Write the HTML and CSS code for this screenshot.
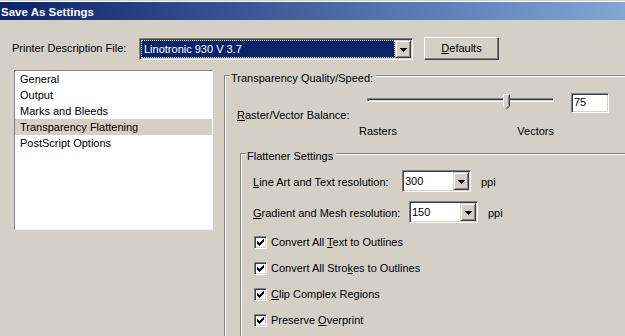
FILE: index.html
```html
<!DOCTYPE html>
<html>
<head>
<meta charset="utf-8">
<link rel="stylesheet" href="styles.css">
</head>
<body>
<div class="frame-top"></div>
<div class="caption">Save As Settings</div>
<div class="printer-row">
  <div class="printer-label">Printer Description File:</div>
  <div class="combo combo-printer">
    <div class="combo-value"><span class="sel">Linotronic 930 V 3.7</span></div>
    <div class="combo-btn"><svg width="7" height="4" viewBox="0 0 7 4"><path d="M0 0h7v1h-1v1h-1v1h-1v1h-1v-1h-1v-1h-1v-1h-1z" fill="#000"/></svg></div>
  </div>
  <div class="button"><u>D</u>efaults</div>
</div>
<div class="main">
  <div class="list">
    <div class="item">General</div>
    <div class="item">Output</div>
    <div class="item">Marks and Bleeds</div>
    <div class="item selected">Transparency Flattening</div>
    <div class="item">PostScript Options</div>
  </div>
  <div class="group outer">
    <div class="group-title">Transparency Quality/Speed:</div>
    <div class="balance">
      <div class="bal-label"><u>R</u>aster/Vector Balance:</div>
      <div class="bal-slider">
        <div class="slider">
          <div class="track"></div>
          <svg class="thumb" width="7" height="16" viewBox="0 0 7 16">
            <path d="M0 0h7v12l-3.5 3.5L0 12z" fill="#d4d0c8"/>
            <path d="M0.5 12.5V0.5h6" fill="none" stroke="#fff" stroke-width="1"/>
            <path d="M6.5 0.5v11.5l-3.2 3.2" fill="none" stroke="#404040" stroke-width="1"/>
            <path d="M5.5 1.5v10.2l-2.6 2.6" fill="none" stroke="#808080" stroke-width="1"/>
          </svg>
        </div>
        <div class="ends"><span>Rasters</span><span>Vectors</span></div>
      </div>
      <div class="textfield">75</div>
    </div>
    <div class="group inner">
      <div class="group-title">Flattener Settings</div>
      <div class="res-row first">
        <div class="res-label w-line"><u>L</u>ine Art and Text resolution:</div>
        <div class="combo combo-small">
          <div class="combo-value">300</div>
          <div class="combo-btn"><svg width="7" height="4" viewBox="0 0 7 4"><path d="M0 0h7v1h-1v1h-1v1h-1v1h-1v-1h-1v-1h-1v-1h-1z" fill="#000"/></svg></div>
        </div>
        <div class="unit">ppi</div>
      </div>
      <div class="res-row second">
        <div class="res-label w-grad"><u>G</u>radient and Mesh resolution:</div>
        <div class="combo combo-small">
          <div class="combo-value">150</div>
          <div class="combo-btn"><svg width="7" height="4" viewBox="0 0 7 4"><path d="M0 0h7v1h-1v1h-1v1h-1v1h-1v-1h-1v-1h-1v-1h-1z" fill="#000"/></svg></div>
        </div>
        <div class="unit">ppi</div>
      </div>
      <div class="checks">
        <div class="check-row"><span class="checkbox"><svg width="7" height="7" viewBox="0 0 7 7"><path d="M6 0h1v1h-1zM5 1h2v1h-2zM0 2h1v1h-1zM4 2h3v1h-3zM0 3h2v1h-2zM3 3h3v1h-3zM0 4h5v1h-5zM1 5h3v1h-3zM2 6h1v1h-1z" fill="#000"/></svg></span><span class="check-label">Convert All <u>T</u>ext to Outlines</span></div>
        <div class="check-row"><span class="checkbox"><svg width="7" height="7" viewBox="0 0 7 7"><path d="M6 0h1v1h-1zM5 1h2v1h-2zM0 2h1v1h-1zM4 2h3v1h-3zM0 3h2v1h-2zM3 3h3v1h-3zM0 4h5v1h-5zM1 5h3v1h-3zM2 6h1v1h-1z" fill="#000"/></svg></span><span class="check-label">Convert All Stro<u>k</u>es to Outlines</span></div>
        <div class="check-row"><span class="checkbox"><svg width="7" height="7" viewBox="0 0 7 7"><path d="M6 0h1v1h-1zM5 1h2v1h-2zM0 2h1v1h-1zM4 2h3v1h-3zM0 3h2v1h-2zM3 3h3v1h-3zM0 4h5v1h-5zM1 5h3v1h-3zM2 6h1v1h-1z" fill="#000"/></svg></span><span class="check-label"><u>C</u>lip Complex Regions</span></div>
        <div class="check-row"><span class="checkbox"><svg width="7" height="7" viewBox="0 0 7 7"><path d="M6 0h1v1h-1zM5 1h2v1h-2zM0 2h1v1h-1zM4 2h3v1h-3zM0 3h2v1h-2zM3 3h3v1h-3zM0 4h5v1h-5zM1 5h3v1h-3zM2 6h1v1h-1z" fill="#000"/></svg></span><span class="check-label">Preserve <u>O</u>verprint</span></div>
      </div>
    </div>
  </div>
</div>
</body>
</html>
```
FILE: styles.css
```css
* { box-sizing: border-box; }
html, body {
  margin: 0;
  padding: 0;
}
body {
  width: 625px;
  height: 336px;
  overflow: hidden;
  background: #d4d0c8;
  font-family: "Liberation Sans", Arial, sans-serif;
  font-size: 11px;
  line-height: 13px;
  color: #000;
}
u { text-decoration: underline; text-underline-offset: 1px; }

.frame-top {
  height: 2px;
  border-top: 1px solid #d4d0c8;
  background: #ffffff;
}
.caption {
  height: 18px;
  line-height: 20px;
  padding-left: 1px;
  font-weight: bold;
  font-size: 11.5px;
  color: #fff;
  white-space: nowrap;
  overflow: hidden;
  background: linear-gradient(to right, #0a246a 0px, #82a6d6 625px);
}

/* printer row */
.printer-row {
  display: flex;
  align-items: center;
  margin-top: 17px;
  height: 23px;
  padding-left: 12px;
}
.printer-label {
  width: 127px;
  white-space: nowrap;
}
.combo {
  display: flex;
  height: 22px;
  padding: 1px;
  border: 1px solid;
  border-color: #808080 #fff #fff #808080;
  box-shadow: inset 1px 1px 0 #404040, inset -1px -1px 0 #d4d0c8;
  background: #fff;
}
.combo-printer {
  width: 274px;
  margin-top: 1px;
}
.combo-value {
  flex: 1;
  display: flex;
  align-items: center;
  white-space: nowrap;
  overflow: hidden;
}
.sel {
  flex: 1;
  align-self: stretch;
  display: flex;
  align-items: center;
  padding-left: 2px;
  background: #0a246a;
  color: #fff;
  border: 1px dotted #f4eeb4;
}
.combo-btn {
  width: 16px;
  display: flex;
  align-items: center;
  justify-content: center;
  background: #d4d0c8;
  border: 1px solid;
  border-color: #d4d0c8 #404040 #404040 #d4d0c8;
  box-shadow: inset 1px 1px 0 #fff, inset -1px -1px 0 #808080;
}
.combo-btn svg { display: block; margin-top: 1px; }
.button {
  width: 75px;
  height: 23px;
  margin-left: 11px;
  display: flex;
  align-items: center;
  justify-content: center;
  border: 1px solid;
  border-color: #fff #404040 #404040 #fff;
  box-shadow: inset -1px -1px 0 #808080;
  background: #d4d0c8;
}

/* main */
.main {
  display: flex;
  align-items: flex-start;
  margin-top: 10px;
  padding-left: 14px;
}
.list {
  width: 199px;
  height: 160px;
  flex: none;
  background: #fff;
  border: 1px solid;
  border-color: #808080 #fff #eeeeee #808080;
}
.item {
  height: 16px;
  line-height: 16px;
  padding-left: 5px;
  white-space: nowrap;
}
.item.selected { background: #d4d0c8; }

.group {
  border-top: 1px solid #808080;
  border-left: 1px solid #808080;
  box-shadow: inset 1px 1px 0 #fff;
}
.group-title {
  display: block;
  width: fit-content;
  height: 13px;
  margin-top: -4px;
  margin-left: 5px;
  padding: 0 3px 0 1px;
  background: #d4d0c8;
  white-space: nowrap;
}
.outer {
  flex: none;
  width: 401px;
  height: 261px;
  margin-left: 11px;
  margin-top: 5px;
}

.balance {
  display: flex;
  align-items: flex-start;
  margin-top: 8px;
  padding-left: 12px;
}
.bal-label {
  width: 122px;
  margin-top: 16px;
  white-space: nowrap;
}
.bal-slider {
  width: 200px;
}
.slider {
  position: relative;
  height: 20px;
  padding-top: 5px;
  padding-left: 8px;
}
.track {
  width: 187px;
  height: 4px;
  border: 1px solid;
  border-color: #808080 #fff #fff #808080;
  box-shadow: inset 1px 1px 0 #404040, inset -1px -1px 0 #d4d0c8;
}
.thumb {
  position: absolute;
  left: 144px;
  top: 1px;
  display: block;
}
.ends {
  display: flex;
  justify-content: space-between;
  width: 195px;
  margin-top: 12px;
}
.textfield {
  width: 38px;
  height: 20px;
  margin-left: 12px;
  padding-left: 2px;
  line-height: 16px;
  background: #fff;
  border: 1px solid;
  border-color: #808080 #fff #fff #808080;
  box-shadow: inset 1px 1px 0 #404040, inset -1px -1px 0 #d4d0c8;
}

.inner {
  width: 385px;
  height: 183px;
  margin-top: 15px;
  margin-left: 15px;
}
.res-row {
  display: flex;
  align-items: center;
  height: 22px;
  padding-left: 12px;
}
.res-row.first { margin-top: 7px; }
.res-row.second { margin-top: 9px; }
.res-label { white-space: nowrap; padding-top: 2px; }
.w-line { width: 149px; }
.w-grad { width: 156px; }
.combo-small { width: 69px; }
.combo-small .combo-value { padding-left: 1px; }
.unit { margin-left: 10px; padding-top: 2px; }

.checks {
  margin-top: 13px;
  padding-left: 13px;
  display: flex;
  flex-direction: column;
  gap: 13px;
}
.check-row {
  display: flex;
  align-items: center;
  height: 13px;
}
.checkbox {
  width: 13px;
  height: 13px;
  flex: none;
  padding: 2px;
  background: #fff;
  border: 1px solid;
  border-color: #808080 #fff #fff #808080;
  box-shadow: inset 1px 1px 0 #404040, inset -1px -1px 0 #d4d0c8;
}
.checkbox svg { display: block; }
.check-label {
  margin-left: 4px;
  white-space: nowrap;
}
```
